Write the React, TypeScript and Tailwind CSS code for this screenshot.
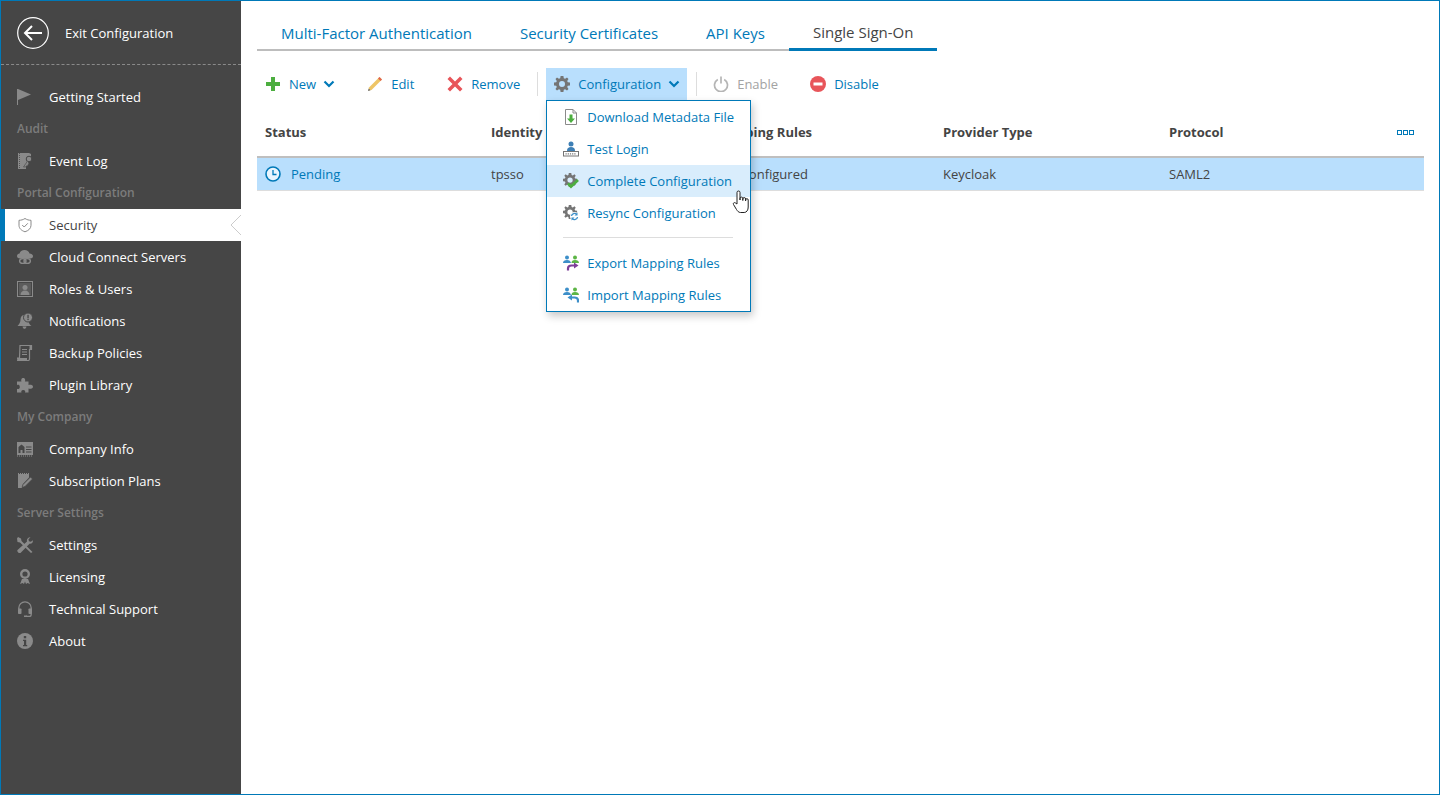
import type { ReactNode } from "react"

const Ico = ({ children, size = 16, className = "" }: { children: ReactNode; size?: number; className?: string }) => (
  <svg width={size} height={size} viewBox="0 0 16 16" className={"shrink-0 " + className}>
    {children}
  </svg>
)

const gray = "#8a8a8a"
const side = "#464646"

const FlagIcon = () => (
  <Ico>
    <rect x="0" y="0" width="1" height="16" fill={gray} />
    <path d="M1 0 14 5.500 1 11z" fill={gray} />
  </Ico>
)
const LogIcon = () => (
  <Ico>
    <path d="M1 0h11l2 1v6l-3 1-2 3v5H1z" fill={gray} />
    <path d="M2.500 0v16" stroke={side} strokeWidth=".8" strokeDasharray="1 1" />
    <circle cx="12" cy="6" r="2.800" fill={gray} stroke={side} />
    <path d="M10.500 8 6.500 14h2.200l1-1.300 1 .3 1-2.500" fill={gray} stroke={side} strokeWidth=".6" />
  </Ico>
)
const ShieldIcon = () => (
  <Ico>
    <path d="M8 1.500c2 1.300 3.700 1.700 6 1.800v5c0 3.200-2.500 5.300-6 6.500-3.500-1.200-6-3.300-6-6.500v-5c2.300-.1 4-.5 6-1.800z" fill="none" stroke={gray} />
    <path d="m5.200 8 2 2 3.600-3.700" fill="none" stroke={gray} />
  </Ico>
)
const CloudIcon = () => (
  <Ico>
    <path d="M3 9.500C1 9.500 0 8.300 0 7c0-1.500 1.200-2.500 2.600-2.500C3 2.500 5 1 7.500 1c2.600 0 4.500 1.500 5 3.500 2 0 3.500 1.200 3.500 2.800 0 1.300-1 2.200-2.500 2.200z" fill={gray} />
    <ellipse cx="5.800" cy="12" rx="3.200" ry="2.400" fill="none" stroke={gray} strokeWidth="1.400" />
    <ellipse cx="10.200" cy="12" rx="3.200" ry="2.400" fill="none" stroke={gray} strokeWidth="1.400" />
  </Ico>
)
const RolesIcon = () => (
  <Ico>
    <rect x=".5" y=".5" width="15" height="15" fill="none" stroke={gray} />
    <rect x="2" y="2" width="12" height="12" fill="#5c5c5c" />
    <circle cx="8" cy="6.500" r="2.500" fill={gray} />
    <path d="M3.500 14c0-3 2-4.500 4.500-4.500s4.500 1.500 4.500 4.500z" fill={gray} />
  </Ico>
)
const BellIcon = () => (
  <Ico>
    <path d="M7.500 2C5 2 3.500 4 3.500 6.500c0 3-1.500 5-3 6.500h14c-1.500-1-2.500-2.500-2.800-4z" fill={gray} />
    <path d="M5.500 13.500c.3 1.500 1.200 2.300 2 2.300s1.700-.8 2-2.300z" fill={gray} />
    <circle cx="11" cy="4.500" r="4.500" fill={gray} stroke={side} />
    <rect x="10.400" y="1.800" width="1.300" height="3.400" fill={side} />
    <rect x="10.400" y="5.800" width="1.300" height="1.300" fill={side} />
  </Ico>
)
const ScrollIcon = () => (
  <Ico>
    <path d="M3 .5h11.500v4H12.500v9.500c0 .8-.6 1.500-1.500 1.500H1c-.7 0-1-.5-1-1.200V13h2.500z" fill="none" stroke={gray} strokeWidth="1.200" />
    <path d="M12.500 1h2v3h-2z" fill={gray} />
    <path d="M0 13h10v2.500H1z" fill={gray} />
    <path d="M5 4.500h5M5 7h5M5 9.500h5" stroke={gray} strokeWidth="1.200" />
  </Ico>
)
const PuzzleIcon = () => (
  <Ico>
    <path d="M0 4.500h4.500C4 3.500 4 1 6.200 1s2.300 2.500 1.700 3.500h3.600v3.600c1-.6 4.500-.6 4.500 1.700s-3.500 2.300-4.500 1.700V15.500H8c.6-1 .2-2.600-1.800-2.600S4 14.500 4.500 15.500H0v-3.700c1 .5 2.800.4 2.800-1.800S1 7.500 0 8.200z" fill={gray} />
  </Ico>
)
const CompanyIcon = () => (
  <Ico>
    <rect x="0" y="1" width="16" height="13" fill={gray} />
    <path d="M0 15h16" stroke={gray} strokeDasharray="1 1" />
    <path d="M4.500 3.500 1.500 6v6h2V9h2v3h2V6z" fill={side} />
    <path d="M9 6h5.500M9 8.500h5.500M9 11h5.500" stroke={side} />
  </Ico>
)
const PlanIcon = () => (
  <Ico>
    <path d="M1 1h11v3.500L6 11l-1 4H1z" fill={gray} />
    <path d="M1 .5h11" stroke={gray} strokeDasharray="1 1" />
    <path d="m13.500 4 2 2-7.500 7.500-3 1 1-3z" fill={gray} stroke={side} strokeWidth=".7" />
  </Ico>
)
const ToolsIcon = () => (
  <Ico>
    <path d="M1 0 4 1.500 4.500 4l11 11-1.500 1L3 5.500.5 5 0 1.500z" fill={gray} />
    <path d="M15.800 3.200c.6 2.200-1 4-3.300 3.600L3.500 16c-1 1-4-1.500-3-3L10 4.500C9.300 2.200 11.500 0 13.500.3l-2 2 .4 2 2 .5z" fill={gray} />
  </Ico>
)
const AwardIcon = () => (
  <Ico>
    <circle cx="8" cy="5" r="3.800" fill="none" stroke={gray} strokeWidth="2.400" />
    <path d="M5 10 3 15l2.500-1L7 15l1-2.500L9 15l1.500-1L13 15l-2-5z" fill={gray} />
  </Ico>
)
const HeadsetIcon = () => (
  <Ico>
    <path d="M1.800 8V7a6.200 6.200 0 0 1 12.400 0V13.500c0 1.200-.8 2-2 2H9" fill="none" stroke={gray} strokeWidth="1.300" />
    <rect x="1" y="7.500" width="3.500" height="5.500" rx=".8" fill={gray} />
    <rect x="11.500" y="7.500" width="3.500" height="5.500" rx=".8" fill={gray} />
    <rect x="7" y="14.500" width="3" height="1.500" fill={gray} />
  </Ico>
)
const InfoIcon = () => (
  <Ico>
    <circle cx="8" cy="8" r="8" fill={gray} />
    <rect x="6.800" y="3" width="2.400" height="2.300" fill={side} />
    <path d="M6 6.800h3.200v5.200h1v1.300H6V12h1V8H6z" fill={side} />
  </Ico>
)

const GearPath = ({ fill = "#757575" }: { fill?: string }) => (
  <path
    fillRule="evenodd"
    d="M6.600 0h2.800l.4 2.200 1.300.6L13 1.500l1.500 1.500-1.300 1.900.6 1.300L16 6.600v2.800l-2.200.4-.6 1.300 1.300 1.900-1.500 1.500-1.900-1.300-1.300.6L9.400 16H6.600l-.4-2.200-1.300-.6L3 14.500 1.500 13l1.300-1.900-.6-1.300L0 9.400V6.600l2.200-.4.6-1.300L1.500 3 3 1.500l1.900 1.300 1.300-.6zM8 5a3 3 0 1 0 0 6 3 3 0 0 0 0-6z"
    fill={fill}
  />
)

const Chevron = () => (
  <svg width="12" height="8" viewBox="0 0 12 8" className="-ml-px shrink-0">
    <path d="M1.500 1.500 6 6l4.500-4.500" fill="none" stroke="#0079b8" strokeWidth="2.200" />
  </svg>
)

const PeopleBase = () => (
  <>
    <circle cx="4" cy="2.500" r="2" fill="#3d8fc9" />
    <path d="M0 8c0-2 1.500-3 4-3s3.500 1 4 3z" fill="#3d8fc9" />
    <circle cx="12" cy="2.500" r="2" fill="#5cb545" />
    <path d="M8.500 8c0-2 1-3 3.500-3s4 1 4 3z" fill="#5cb545" />
  </>
)

const menuItems: { label: string; icon: ReactNode; active?: boolean }[] = [
  {
    label: "Download Metadata File",
    icon: (
      <Ico>
        <path d="M2.500.5h7.500l3.500 3.500v11.500h-11z" fill="#fff" stroke="#8a8a8a" />
        <path d="M10 .5V4h3.500" fill="none" stroke="#8a8a8a" />
        <path d="M6.500 5.500h3v4h2.500L8 14 4 9.500h2.500z" fill="#4cae3f" />
      </Ico>
    ),
  },
  {
    label: "Test Login",
    icon: (
      <Ico>
        <circle cx="8" cy="3" r="2.500" fill="#3d7fb5" />
        <path d="M4 10c0-3 1.500-4 4-4s4 1 4 4z" fill="#3d7fb5" />
        <rect x=".5" y="10.500" width="15" height="4.500" fill="#fff" stroke="#757575" />
        <path d="M2.500 12.800h11" stroke="#757575" strokeWidth="1.200" strokeDasharray="1.200 1" />
      </Ico>
    ),
  },
  {
    label: "Complete Configuration",
    active: true,
    icon: (
      <Ico>
        <g transform="scale(.88)">
          <GearPath />
        </g>
        <path d="m5 10.500 3 3 7-6.500" fill="none" stroke="#4cae3f" strokeWidth="2.800" />
      </Ico>
    ),
  },
  {
    label: "Resync Configuration",
    icon: (
      <Ico>
        <g transform="scale(.88)">
          <GearPath />
        </g>
        <circle cx="11.500" cy="11.500" r="4.500" fill="#fff" />
        <path d="M8.500 11a3 3 0 0 1 5.300-1.500M14.500 12a3 3 0 0 1-5.300 1.500" fill="none" stroke="#3d8fc9" strokeWidth="1.300" />
        <path d="M14.500 7.500v3h-3zM8.500 15.500v-3h3z" fill="#3d8fc9" />
      </Ico>
    ),
  },
]

const mappingItems = [
  {
    label: "Export Mapping Rules",
    icon: (
      <Ico>
        <PeopleBase />
        <path d="M5 15.500v-2c0-2 1.500-3 3.500-3H12" fill="none" stroke="#7d3f98" strokeWidth="2.200" />
        <path d="M11 7.500 15.500 10.500 11 13.500z" fill="#7d3f98" />
      </Ico>
    ),
  },
  {
    label: "Import Mapping Rules",
    icon: (
      <Ico>
        <PeopleBase />
        <path d="M15 15.500v-2c0-2-1.500-3-3.500-3H8" fill="none" stroke="#3d8fc9" strokeWidth="2.200" />
        <path d="M9 7.500 4.500 10.500 9 13.500z" fill="#3d8fc9" />
      </Ico>
    ),
  },
]

const MenuRow = ({ label, icon, active }: { label: string; icon: ReactNode; active?: boolean }) => (
  <div className={"flex h-8 items-center gap-2 pl-4 text-[#0079b8] " + (active ? "bg-[#d9edfc]" : "")}>
    {icon}
    <span className="whitespace-nowrap pt-[2px]">{label}</span>
  </div>
)

const ConfigMenu = () => (
  <div className="absolute left-0 top-full z-10 w-[205px] border border-[#0079b8] bg-white shadow-[2px_4px_8px_rgba(0,0,0,0.22)]">
    {menuItems.map((m) => (
      <MenuRow key={m.label} {...m} />
    ))}
    <div className="mb-[9px] ml-4 mr-[17px] mt-2 h-px bg-[#dddddd]" />
    {mappingItems.map((m) => (
      <MenuRow key={m.label} {...m} />
    ))}
    <svg width="18" height="24" viewBox="0 0 17 24" className="absolute left-[185px] top-[89px]">
      <path
        d="M4.500 14V2.500a1.500 1.500 0 0 1 3 0V10 8.500a1.400 1.400 0 0 1 2.800 0v2-1.500a1.400 1.400 0 0 1 2.800 0v2-1a1.300 1.300 0 0 1 2.600 0v7c0 3-1.500 5.500-4 5.500H8c-2 0-3-1.500-4-3l-3-5c-.8-1.200.8-2.600 2-1.500z"
        fill="#fff"
        stroke="#222"
      />
    </svg>
  </div>
)

type NavEntry = { label: string; icon?: ReactNode; active?: boolean }

const nav: NavEntry[] = [
  { label: "Getting Started", icon: <FlagIcon /> },
  { label: "Audit" },
  { label: "Event Log", icon: <LogIcon /> },
  { label: "Portal Configuration" },
  { label: "Security", icon: <ShieldIcon />, active: true },
  { label: "Cloud Connect Servers", icon: <CloudIcon /> },
  { label: "Roles & Users", icon: <RolesIcon /> },
  { label: "Notifications", icon: <BellIcon /> },
  { label: "Backup Policies", icon: <ScrollIcon /> },
  { label: "Plugin Library", icon: <PuzzleIcon /> },
  { label: "My Company" },
  { label: "Company Info", icon: <CompanyIcon /> },
  { label: "Subscription Plans", icon: <PlanIcon /> },
  { label: "Server Settings" },
  { label: "Settings", icon: <ToolsIcon /> },
  { label: "Licensing", icon: <AwardIcon /> },
  { label: "Technical Support", icon: <HeadsetIcon /> },
  { label: "About", icon: <InfoIcon /> },
]

const Sidebar = () => (
  <aside className="w-[240px] shrink-0 bg-[#464646] text-white">
    <div className="flex h-[64px] items-center gap-4 border-b border-dashed border-[#8a8a8a] pl-4">
      <svg width="32" height="32" viewBox="0 0 32 32">
        <circle cx="16" cy="16" r="15.300" fill="none" stroke="#fff" strokeWidth="1.200" />
        <path d="M25 16H8.500M15 9l-7 7 7 7" fill="none" stroke="#fff" strokeWidth="2" />
      </svg>
      <span className="pt-[2px]">Exit Configuration</span>
    </div>
    <nav className="pt-4">
      {nav.map((n) =>
        n.icon ? (
          <div
            key={n.label}
            className={
              "relative flex h-8 items-center gap-4 " +
              (n.active ? "border-l-4 border-[#0079b8] bg-white pl-3 text-[#444444]" : "pl-4")
            }
          >
            {n.icon}
            <span className="pt-[2px]">{n.label}</span>
            {n.active && (
              <svg width="11" height="20" viewBox="0 0 11 20" className="absolute right-0 top-[6px]">
                <path d="M11 0 1 10l10 10" fill="none" stroke="#cccccc" />
              </svg>
            )}
          </div>
        ) : (
          <div key={n.label} className="flex h-8 items-center pl-4 text-[12px] font-semibold text-[#7c7c7c]">
            {n.label}
          </div>
        ),
      )}
    </nav>
  </aside>
)

const tabs = ["Multi-Factor Authentication", "Security Certificates", "API Keys", "Single Sign-On"]

const Tabs = () => (
  <div className="mt-4 flex w-[680px] text-[15px]">
    {tabs.map((t) => (
      <div
        key={t}
        className={
          "flex h-[34px] items-center whitespace-nowrap px-6 " +
          (t === "Single Sign-On"
            ? "border-b-[3px] border-[#0079b8] text-[#444444]"
            : "border-b-2 border-[#bdbdbd] text-[#0079b8]")
        }
      >
        {t}
      </div>
    ))}
  </div>
)

const Btn = ({ icon, label, chevron, disabled, className = "" }: { icon: ReactNode; label: string; chevron?: boolean; disabled?: boolean; className?: string }) => (
  <div className={"flex h-8 items-center gap-2 pl-2 " + (disabled ? "text-[#a3a3a3] " : "text-[#0079b8] ") + className}>
    {icon}
    <span className="pt-[2px]">{label}</span>
    {chevron && <Chevron />}
  </div>
)

const Toolbar = () => (
  <div className="mt-[17px] flex items-center">
    <Btn
      label="New"
      chevron
      className="pr-2"
      icon={
        <Ico size={16}>
          <path d="M6 1h4v5h5v4h-5v5H6v-5H1V6h5z" fill="#4cae3f" />
        </Ico>
      }
    />
    <Btn
      label="Edit"
      className="ml-4 pr-2"
      icon={
        <Ico>
          <path d="M12.500 1 15 3.500 4.500 14 1.500 14.500 2 11.500z" fill="#eec566" />
          <path d="M12.500 1 15 3.500l-1.500 1.500L11 2.500z" fill="#e0654f" />
          <path d="M1 15l.7-2.500 1.800 1.800z" fill="#666" />
        </Ico>
      }
    />
    <Btn
      label="Remove"
      className="ml-[17px] pr-2"
      icon={
        <Ico>
          <path d="M3 .5 8 5.500 13 .5 15.500 3 10.500 8l5 5-2.500 2.500-5-5-5 5L.5 13l5-5-5-5z" fill="#e8555a" />
        </Ico>
      }
    />
    <div className="ml-[9px] mr-2 h-6 w-px bg-[#dddddd]" />
    <div className="relative">
      <Btn label="Configuration" chevron className="bg-[#b9dffd] pr-[7px]" icon={<Ico><GearPath /></Ico>} />
      <ConfigMenu />
    </div>
    <div className="ml-[9px] mr-2 h-6 w-px bg-[#dddddd]" />
    <Btn
      label="Enable"
      disabled
      className="pr-2"
      icon={
        <Ico>
          <path d="M4.800 3.500a6.500 6.500 0 1 0 6.400 0" fill="none" stroke="#b5b5b5" strokeWidth="1.700" />
          <path d="M8 .5v7" stroke="#b5b5b5" strokeWidth="1.700" />
        </Ico>
      }
    />
    <Btn
      label="Disable"
      className="ml-4 pr-2"
      icon={
        <Ico>
          <circle cx="8" cy="8" r="8" fill="#e8555a" />
          <rect x="3.500" y="6.500" width="9" height="3" fill="#fff" />
        </Ico>
      }
    />
  </div>
)

const columns = ["Status", "Identity Provider", "Mapping Rules", "Provider Type", "Protocol"]

const Table = () => (
  <div>
    <div className="relative grid h-[58px] grid-cols-[226px_226px_226px_226px_1fr] items-center border-b-2 border-[#bfbfbf] pt-[10px] font-bold text-[#444444]">
      {columns.map((c) => (
        <div key={c} className="whitespace-nowrap pl-2">
          {c}
        </div>
      ))}
      <div className="absolute right-[10px] top-[30px] flex gap-px">
        <span className="h-[5px] w-[5px] border border-[#0079b8]" />
        <span className="h-[5px] w-[5px] border border-[#0079b8]" />
        <span className="h-[5px] w-[5px] border border-[#0079b8]" />
      </div>
    </div>
    <div className="grid h-[33px] grid-cols-[226px_226px_226px_226px_1fr] items-center border-b border-[#dddddd] bg-[#b9dffd] text-[#444444]">
      <div className="flex items-center gap-[10px] pl-2 text-[#0079b8]">
        <svg width="16" height="16" viewBox="0 0 16 16">
          <circle cx="8" cy="8" r="7" fill="#e9f5fe" stroke="#0079b8" strokeWidth="1.600" />
          <path d="M8 4v4.500h3.500" fill="none" stroke="#0079b8" strokeWidth="1.300" />
        </svg>
        <span className="pt-[2px]">Pending</span>
      </div>
      <div className="pl-2 pt-[2px]">tpsso</div>
      <div className="pl-2 pt-[2px]">Not configured</div>
      <div className="pl-2 pt-[2px]">Keycloak</div>
      <div className="pl-2 pt-[2px]">SAML2</div>
    </div>
  </div>
)

const App = () => {
  return (
    <div className="flex h-[795px] w-[1440px] overflow-hidden border border-[#0079b8] bg-white font-['Open_Sans',sans-serif] text-[13px]">
      <Sidebar />
      <main className="min-w-0 flex-1 pl-4 pr-[15px]">
        <Tabs />
        <Toolbar />
        <Table />
      </main>
    </div>
  )
}

export default App
